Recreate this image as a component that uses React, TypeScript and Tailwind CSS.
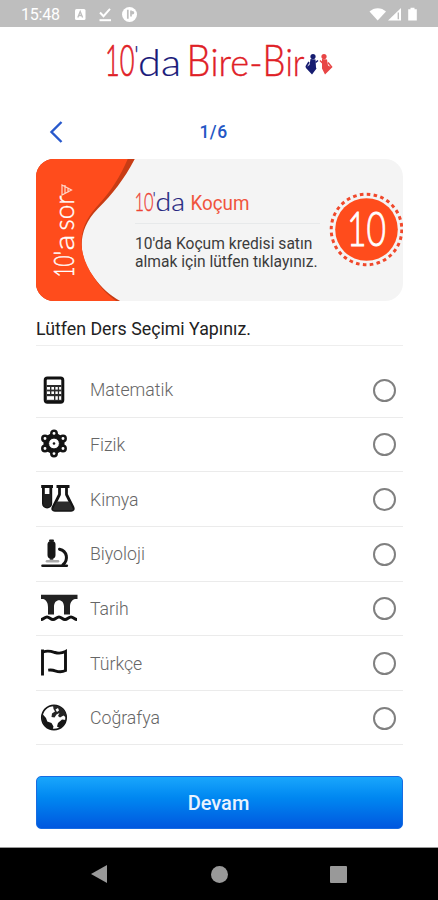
import type { ReactNode } from "react";

interface Subject {
  name: string;
  icon: ReactNode;
}

function CalculatorIcon() {
  return (
    <svg width="42" height="36" viewBox="0 0 42 36" fill="none">
      <rect x="9.2" y="6" width="17.6" height="24.2" rx="2.2" fill="#fff" stroke="#111" strokeWidth="3" />
      <rect x="10.5" y="13" width="15" height="16" fill="#2c2c2c" />
      <g fill="#fff">
        <rect x="11" y="15" width="3" height="2.6" />
        <rect x="15.4" y="15" width="2.6" height="2.6" />
        <rect x="19.4" y="15" width="2.4" height="2.6" />
        <rect x="23.1" y="15" width="2" height="2.6" />
        <rect x="11" y="19.4" width="3" height="2.6" />
        <rect x="15.4" y="19.4" width="2.6" height="2.6" />
        <rect x="19.4" y="19.4" width="2.4" height="2.6" />
        <rect x="23.1" y="19.4" width="2" height="2.6" />
        <rect x="11" y="24.2" width="7" height="3.6" />
        <rect x="19.4" y="24.2" width="2.4" height="3.6" />
        <rect x="23.1" y="24.2" width="2" height="3.6" />
      </g>
    </svg>
  );
}

function AtomIcon() {
  return (
    <svg width="42" height="36" viewBox="0 0 42 36" fill="none" stroke="#141414">
      <path d="M18 8 26.5 12.7v9.6L18 27l-8.5-4.700v-9.600z" fill="#141414" strokeWidth="4" strokeLinejoin="round" />
      <circle cx="18" cy="17.5" r="5.4" fill="#fff" strokeWidth="1" />
      <circle cx="18" cy="17.5" r="1.3" fill="#141414" stroke="none" />
      <g fill="#fff" strokeWidth="2.5">
        <circle cx="18" cy="7.4" r="2.7" />
        <circle cx="18" cy="27.6" r="2.7" />
        <circle cx="9" cy="12.5" r="2.7" />
        <circle cx="27" cy="12.5" r="2.7" />
        <circle cx="9" cy="22.5" r="2.7" />
        <circle cx="27" cy="22.5" r="2.7" />
      </g>
    </svg>
  );
}

function FlaskIcon() {
  return (
    <svg width="42" height="36" viewBox="0 0 42 36" fill="none">
      <path d="M5.2 5.5H17" stroke="#141414" strokeWidth="3" />
      <path d="M7.4 6v16.5a3.7 3.7 0 0 0 7.4 0V6" stroke="#141414" strokeWidth="2.8" />
      <path d="M7.4 13h7.4v9.5a3.7 3.7 0 0 1-7.4 0z" fill="#222" />
      <path d="M20.5 5.500h13" stroke="#141414" strokeWidth="3" />
      <path d="M23.5 6v7.500L17 26.500q-1 2.800 1.800 2.800h16.400q2.800 0 1.800-2.800L30.500 13.500V6" stroke="#141414" strokeWidth="2.8" strokeLinejoin="round" />
      <path d="M21 20.500h12l4 7.500q0 1.300-1.500 1.300h-17q-1.500 0-1.500-1.300z" fill="#2c2c2c" />
    </svg>
  );
}

function MicroscopeIcon() {
  return (
    <svg width="42" height="36" viewBox="0 0 42 36" fill="none" strokeLinecap="round">
      <rect x="11.5" y="5" width="8" height="17.5" rx="3.5" fill="#161616" />
      <path d="M14 4.6h3" stroke="#161616" strokeWidth="2" />
      <path d="M14.5 22.8h2" stroke="#222" strokeWidth="2" />
      <path d="M11 25.3h11" stroke="#aaa" strokeWidth="2.6" />
      <path d="M23.5 13.2C31.5 15 32.5 24 27 28.7" stroke="#161616" strokeWidth="3" />
      <path d="M6.5 29.8h24.3" stroke="#161616" strokeWidth="2.6" />
    </svg>
  );
}

function BridgeIcon() {
  return (
    <svg width="42" height="36" viewBox="0 0 42 36" fill="none">
      <path d="M5 4.7h36.5v4.3h-2.600c-3.800 1.400-4.900 4.400-4.900 8.300v7.200h-6v-7.800c0-8.600-10-8.600-10 0v7.800h-6v-7.200c0-3.900-1.200-6.900-4.700-8.300H5z" fill="#222" />
      <path d="M5 29.5c2.5 0 3.5-2.5 6-2.5s3.5 2.5 6 2.5 3.5-2.5 6-2.5 3.5 2.5 6 2.5 3.5-2.5 6-2.5 3.5 2.5 6 2.5" stroke="#111" strokeWidth="3" />
    </svg>
  );
}

function FlagIcon() {
  return (
    <svg width="42" height="36" viewBox="0 0 42 36" fill="none" stroke="#111" strokeWidth="2.9">
      <path d="M6.5 4.5v26" />
      <path d="M7 7c5-2 8-.8 12 .5s7 .8 10.5-1V25.500c-4 2-7 1.500-10.300.3-2.500-1-4.500-1-7-.7" />
    </svg>
  );
}

function GlobeIcon() {
  return (
    <svg width="42" height="36" viewBox="0 0 42 36" fill="none">
      <circle cx="18" cy="17.5" r="12.2" fill="#fff" stroke="#161616" strokeWidth="1.7" />
      <path d="M17 5.5c5.5 0 10.5 2.5 12.5 7.500l1 5-3-2.500-3.500 2-2-1.500 1.500-3-3 1.500-2 3-3-.5.5-3.500 3-2-1.500-2.500z" fill="#252525" />
      <path d="M6.5 14l3.500 4 1.300 3.500 4.200 1.500 2 3.500-1 3.500C9 28.500 5 21 6.500 14z" fill="#161616" />
      <path d="M22 23l4-3.500 4 .5c-1 3.500-3 6-6.500 8l-2.500-1.500z" fill="#161616" />
      <path d="M19.500 9.500l2.500-1.500 1 2.500-2 1.500z" fill="#fff" />
    </svg>
  );
}

const SUBJECTS: Subject[] = [
  { name: "Matematik", icon: <CalculatorIcon /> },
  { name: "Fizik", icon: <AtomIcon /> },
  { name: "Kimya", icon: <FlaskIcon /> },
  { name: "Biyoloji", icon: <MicroscopeIcon /> },
  { name: "Tarih", icon: <BridgeIcon /> },
  { name: "Türkçe", icon: <FlagIcon /> },
  { name: "Coğrafya", icon: <GlobeIcon /> },
];

function StatusBar() {
  return (
    <div className="flex h-[27px] shrink-0 items-center bg-[#bebebe] pl-[21px] pr-[19px] text-white">
      <span className="w-[53px] pt-[2px] text-[16px] leading-none tracking-[-0.2px]">15:48</span>
      <svg width="66" height="18" viewBox="0 0 66 18">
        <rect x="1" y="4" width="10.5" height="11" rx="1.5" fill="#fff" />
        <path d="M3.8 12.5 6.2 6.500l2.400 6M4.800 10.500h2.800" stroke="#bebebe" strokeWidth="1.3" fill="none" />
        <path d="m26 7.5 3.5 3.700L36 3.800" stroke="#fff" strokeWidth="2" fill="none" />
        <path d="M25.5 15.200H37" stroke="#fff" strokeWidth="2" />
        <circle cx="55.5" cy="9.5" r="7.5" fill="#fff" />
        <path d="M53.8 4.700v9M57 5.500v6" stroke="#bebebe" strokeWidth="1.7" />
        <circle cx="58.5" cy="7.8" r="1.8" fill="#bebebe" />
      </svg>
      <svg className="ml-auto" width="50" height="18" viewBox="0 0 50 18">
        <path d="M.5 6.500C5 2 12.500 2 17 6.500L8.700 15.500z" fill="#fff" />
        <path d="M32 3v12.500H19z" fill="#fff" />
        <path d="M29.3 7.500v6.800" stroke="#bebebe" strokeWidth="1.4" />
        <path d="M41.5 2.800h4v1.400h2.300v11.300h-8.600V4.200h2.300z" fill="#fff" />
      </svg>
    </div>
  );
}

function Logo() {
  return (
    <svg
      className="mx-auto mt-2 shrink-0"
      width="238"
      height="55"
      viewBox="100 35 238 55"
      fontFamily="Lato, sans-serif"
      fontWeight="300"
      fontSize="38"
    >
      <text y="76.3" fill="#19197a" stroke="#19197a" strokeWidth="0.2">
        <tspan x="105" fontSize="43" fill="#df2026" stroke="#df2026" strokeWidth="0.7" textLength="29.5" lengthAdjust="spacingAndGlyphs">10</tspan>
        <tspan x="134" y="64" fontSize="25">'</tspan>
        <tspan x="138" y="76.3" textLength="43" lengthAdjust="spacingAndGlyphs">da</tspan>
      </text>
      <text y="76.3" fill="#df2026" stroke="#df2026" strokeWidth="0.4">
        <tspan x="186.5" fontSize="43" textLength="24" lengthAdjust="spacingAndGlyphs">B</tspan>
        <tspan x="210.5" textLength="52" lengthAdjust="spacingAndGlyphs">ire-</tspan>
        <tspan x="262.5" fontSize="43" textLength="23" lengthAdjust="spacingAndGlyphs">B</tspan>
        <tspan x="285.5" textLength="19" lengthAdjust="spacingAndGlyphs">ir</tspan>
      </text>
      <circle cx="313" cy="56.5" r="2.6" fill="#161c70" />
      <path d="m310.500 59 5 .5 .5 8 .5 1-4.500 6-6.500-7 4-2.500z" fill="#161c70" />
      <path d="m306 67 3-5M315.500 62.500l2.500-2" stroke="#161c70" strokeWidth="1.6" />
      <circle cx="324" cy="56.5" r="2.6" fill="#e84545" />
      <path d="m322 59 5 .5 1 6 4 2-7 7-3-6z" fill="#e84545" />
      <path d="m320 60.500 3 3M328 62.500l4 5" stroke="#e84545" strokeWidth="1.5" />
    </svg>
  );
}

function CoachCard() {
  return (
    <div className="mt-[6.5px] flex h-[142px] shrink-0 overflow-hidden rounded-[18px] bg-[#f4f4f4]">
      <svg className="shrink-0" width="99" height="142" viewBox="36 158.5 99 142">
        <path d="M36 158h99c-11 21-22 35-37 50-21 21-21 47-4 69 8 11 16 18 27 24H36z" fill="#c73c14" />
        <path d="M36 158h92c-8 18-16 32-32 49-20 22-18 47-2 70 7 11 14 18 23 24H36z" fill="#ff4c1c" />
        <text transform="translate(74 277) rotate(-90)" fill="#fff" fontFamily="Lato, sans-serif" fontSize="28" fontWeight="300" stroke="#fff" strokeWidth="0.4">
          <tspan x="0" textLength="22" lengthAdjust="spacingAndGlyphs">10</tspan>
          <tspan x="21.5">'</tspan>
          <tspan x="27" textLength="16" lengthAdjust="spacingAndGlyphs">a</tspan>
          <tspan x="47" textLength="35" lengthAdjust="spacingAndGlyphs">sor</tspan>
        </text>
        <path d="m62 184.500 9.500 5L62 194.500zM65 184.500v9M68 187v5" stroke="#ffd9cb" strokeWidth="1.2" fill="none" />
      </svg>
      <div className="w-[190px] shrink-0 pt-[24px]">
        <svg className="block" width="120" height="36" viewBox="135 182.5 120 36">
          <text y="210" fill="#25257f" stroke="#25257f" strokeWidth="0.2" fontFamily="Lato, sans-serif" fontWeight="300" fontSize="25">
            <tspan x="134.500" fill="#ed4437" stroke="#ed4437" strokeWidth="0.400" textLength="19" lengthAdjust="spacingAndGlyphs">10</tspan>
            <tspan x="152.500" y="204" fontSize="17">'</tspan>
            <tspan x="155.500" y="210" textLength="29.500" lengthAdjust="spacingAndGlyphs">da</tspan>
          </text>
          <text x="190.5" y="209" fill="#f0543d" fontFamily="Roboto, sans-serif" fontSize="19.5" textLength="59" lengthAdjust="spacingAndGlyphs">Koçum</text>
        </svg>
        <div className="mt-[4.5px] h-px w-[185px] bg-[#e7e9ea]" />
        <p className="mt-[11px] whitespace-nowrap text-[15.6px] leading-[18px] text-[#3c3c3c]">
          10'da Koçum kredisi satın
          <br />
          almak için lütfen tıklayınız.
        </p>
      </div>
      <svg className="ml-auto mt-[33px] shrink-0" width="76" height="76" viewBox="0 0 76 76">
        <circle cx="39.5" cy="37.5" r="35.3" fill="none" stroke="#f0482b" strokeWidth="3" strokeDasharray="3.6 3.33" />
        <circle cx="39.5" cy="37.5" r="31.3" fill="#ff4c1c" />
        <text x="20" y="54" fill="#fff" stroke="#fff" strokeWidth="0.9" fontFamily="Lato, sans-serif" fontSize="47" fontWeight="300" textLength="39" lengthAdjust="spacingAndGlyphs">10</text>
      </svg>
    </div>
  );
}

function SubjectRow({ subject }: { subject: Subject }) {
  return (
    <li className="flex h-[54.64px] items-center border-b border-[#ebebeb]">
      {subject.icon}
      <span className="ml-3 pt-[3px] text-[17.7px] font-light leading-none text-[#666]">{subject.name}</span>
      <span className="ml-auto mr-[7px] mt-px size-[23px] rounded-full border-2 border-[#808080]" />
    </li>
  );
}

function NavBar() {
  return (
    <div className="mt-auto flex h-[53px] items-center justify-between border-t border-[#999] bg-black pl-[90px] pr-[91px]">
      <svg width="18" height="20" viewBox="0 0 18 20">
        <path d="M17 1v18L1 10z" fill="#999" />
      </svg>
      <div className="size-[17px] rounded-full bg-[#999]" />
      <div className="size-[17px] rounded-[1px] bg-[#999]" />
    </div>
  );
}

export default function App() {
  return (
    <div className="flex h-[900px] w-[438px] flex-col overflow-hidden bg-white font-['Roboto',sans-serif]">
      <StatusBar />
      <Logo />
      <main className="flex flex-col pl-[36px] pr-[35px] pt-[22px]">
        <div className="grid h-10 grid-cols-3 items-center">
          <svg className="ml-3" width="16" height="24" viewBox="0 0 16 24">
            <path d="M13.5 2 3.5 12l10 10" fill="none" stroke="#2859cc" strokeWidth="2.4" />
          </svg>
          <span className="-ml-3 text-center text-[17.5px] font-medium tracking-[0.5px] text-[#2457c5]">1/6</span>
        </div>
        <CoachCard />
        <h1 className="mt-[15px] h-[30px] border-b border-[#eee] text-[17.8px] leading-[26px] text-[#222]">
          Lütfen Ders Seçimi Yapınız.
        </h1>
        <ul className="pt-[17.5px]">
          {SUBJECTS.map((s) => (
            <SubjectRow key={s.name} subject={s} />
          ))}
        </ul>
        <button className="mt-[30.5px] h-[53.5px] rounded-[5px] border border-[#176ce2] bg-linear-to-b from-[#19a6fc] to-[#0057df] pr-[2px] text-[20px] font-medium text-[#eaf3ff]">
          Devam
        </button>
      </main>
      <NavBar />
    </div>
  );
}
